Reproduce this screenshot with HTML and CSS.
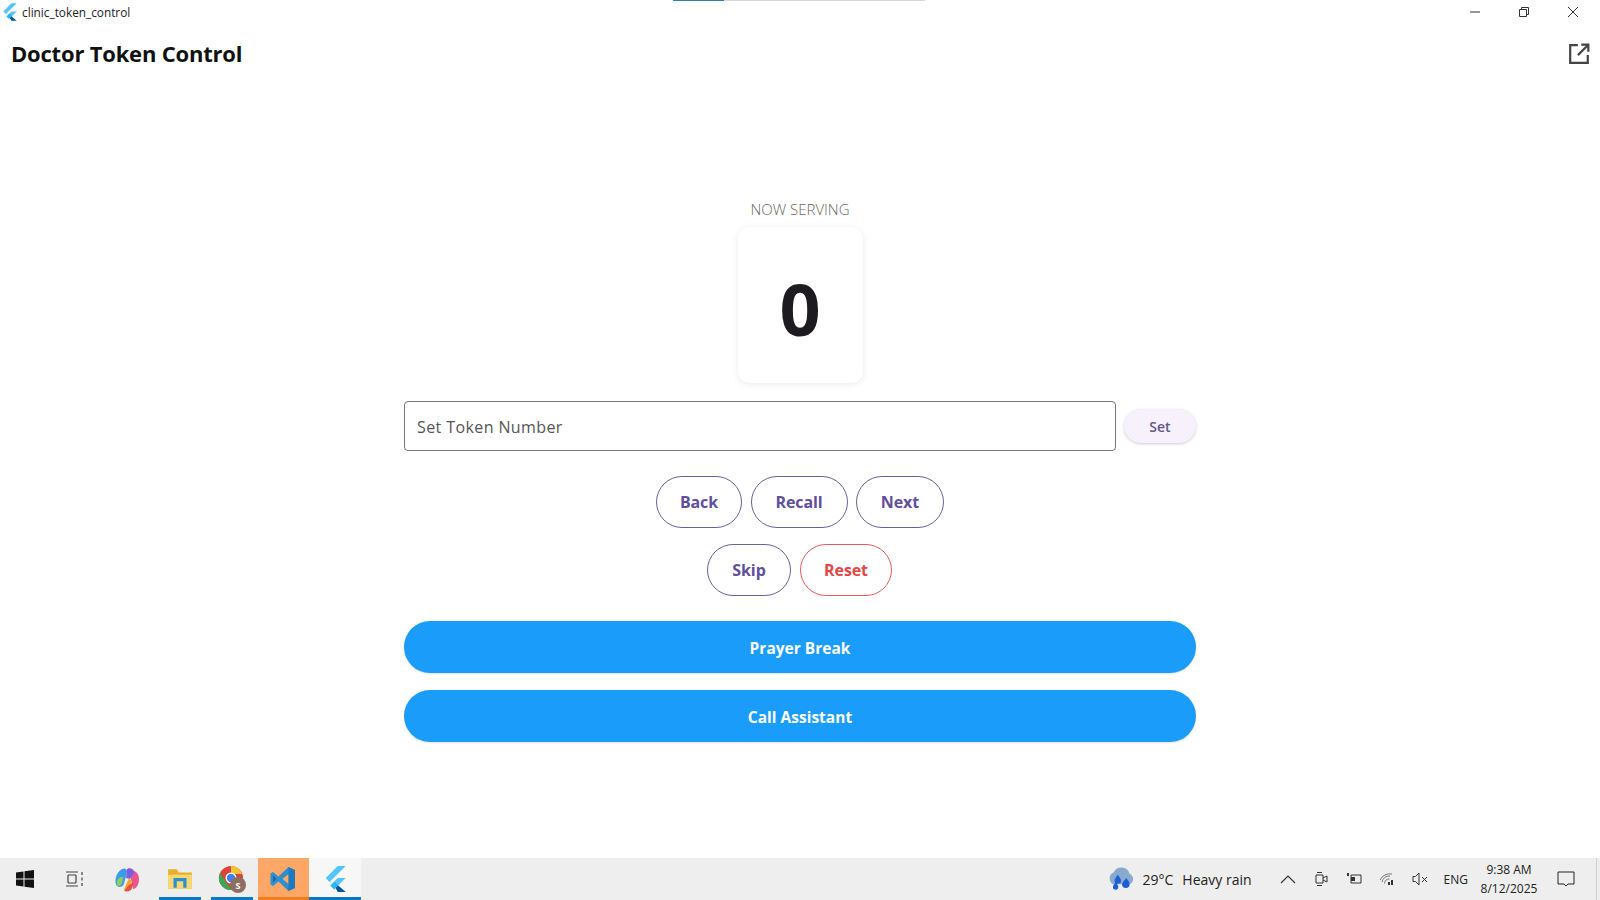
FILE: index.html
```html
<!DOCTYPE html>
<html lang="en">
<head>
  <meta charset="UTF-8">
  <title>clinic_token_control</title>
  <link rel="stylesheet" href="styles.css">
</head>
<body>
  <svg class="defs" width="0" height="0">
    <symbol id="flutter" viewBox="0 0 24 28">
      <path fill="#54c5f8" d="M15 0h8.5L6.2 17.3 2 13z"/>
      <path fill="#54c5f8" d="M15 13h8.5l-8 8-4.3-4.2z"/>
      <path fill="#01579b" d="M11.2 16.8l4.3 4.2 8 7H15l-3.8-7z"/>
      <path fill="#29b6f6" d="M7 21l4.2-4.2 4.3 4.2-4.3 4.2z"/>
    </symbol>
  </svg>

  <!-- progress strip from the screen recorder -->
  <div class="top-strip"><div class="top-strip-fill"></div></div>

  <!-- Window title bar -->
  <div class="titlebar">
    <svg class="titlebar-logo"><use href="#flutter"/></svg>
    <span class="titlebar-name">clinic_token_control</span>
    <div class="window-buttons">
      <svg class="window-btn" viewBox="0 0 12 12"><path d="M1 6h10" stroke="#333" fill="none"/></svg>
      <svg class="window-btn" viewBox="0 0 12 12"><path d="M1.5 3.5h7v7h-7zM3.5 3.5v-2h7v7h-2" stroke="#333" fill="none"/></svg>
      <svg class="window-btn" viewBox="0 0 12 12"><path d="M1 1l10 10M11 1L1 11" stroke="#333" fill="none"/></svg>
    </div>
  </div>

  <!-- App bar -->
  <div class="appbar">
    <div class="appbar-title">Doctor Token Control</div>
    <svg class="appbar-icon" viewBox="0 0 20 20"><path d="M9 2H2v16h16v-7M12 1.500h6.500V8M18 2l-9 9" stroke="#444" stroke-width="2" fill="none"/></svg>
  </div>

  <div class="content">
    <div class="panel">
      <div class="now-label">NOW SERVING</div>
      <div class="token-card">0</div>

      <div class="set-row">
        <div class="token-input">Set Token Number</div>
        <div class="set-btn">Set</div>
      </div>

      <div class="btn-row row-one">
        <div class="pill-btn back">Back</div>
        <div class="pill-btn recall">Recall</div>
        <div class="pill-btn next">Next</div>
      </div>
      <div class="btn-row row-two">
        <div class="pill-btn skip">Skip</div>
        <div class="pill-btn reset">Reset</div>
      </div>

      <div class="wide-btn first">Prayer Break</div>
      <div class="wide-btn">Call Assistant</div>
    </div>
  </div>

  <!-- Windows taskbar -->
  <div class="taskbar">
    <div class="task-item">
      <svg class="icon-20 nudge-start" viewBox="0 0 20 20"><path fill="#111" d="M1 3.500l7.500-1v7H1zM9.500 2.300L19 1v8.500H9.500zM1 10.500h7.500v7l-7.500-1zM9.500 10.500H19V19l-9.500-1.300z"/></svg>
    </div>
    <div class="task-item">
      <svg class="icon-20 nudge-view" viewBox="0 0 20 20"><path fill="none" stroke="#444" stroke-width="1.200" d="M1 3h12M1 17h12M3 6h8M3 14h8M3 6v8M11 6v8M17 3v3M17 8.500v3M17 14v3"/></svg>
    </div>
    <div class="task-item">
      <svg class="icon-26 nudge-view" viewBox="0 0 26 26">
        <path fill="#3f9be8" d="M8 3c3-1.500 5 0 5 3l-3 12c-1 3-5 4-7 2-3-3-2-13 5-17z"/>
        <path fill="#8fcf5a" d="M3 15c1-3 3-4 6-4l-1 6c-1 3-4 4-5 2z"/>
        <path fill="#e8558f" d="M14 2c3 0 5 1 6 3 3 1 5 4 5 8 0 6-3 10-6 10l-2-10z"/>
        <path fill="#7a5fe0" d="M13 3c4-1 7 0 7 4l-4 6-4-1z"/>
        <path fill="#f2a33a" d="M10 23l5-11 3 3-3 8c-1 2-4 2-5 0z"/>
        <path fill="#e5503f" d="M10 25c4 1 7 0 8-3l2-6-5 3z"/>
      </svg>
    </div>
    <div class="task-item running narrow">
      <svg class="icon-26" viewBox="0 0 24 24">
        <path fill="#e8b02a" d="M1 3h8l2 3h12v15H1z"/>
        <path fill="#f7d674" d="M1 8h22v13H1z"/>
        <path fill="#2b8fd0" d="M6 11h12v3H6zM6 14h3v6H6zM15 14h3v6h-3z"/>
      </svg>
    </div>
    <div class="task-item running narrow">
      <svg class="icon-28" viewBox="0 0 28 28">
        <circle cx="13" cy="13" r="12" fill="#d9453a"/>
        <path fill="#f2c230" d="M13 1a12 12 0 0 1 11 8H13z"/>
        <path fill="#3aa757" d="M2 8l7 11 5 6a12 12 0 0 1-12-17z"/>
        <circle cx="13" cy="13" r="5.500" fill="#fff"/>
        <circle cx="13" cy="13" r="4.200" fill="#3f82ee"/>
        <circle cx="20" cy="20" r="8" fill="#8d6e63"/>
        <text class="chrome-letter" x="20" y="24">S</text>
      </svg>
    </div>
    <div class="task-item running active-orange">
      <svg class="icon-26" viewBox="0 0 26 26">
        <path fill="#2d8fd0" d="M18.500 1L25 4v18l-6.500 3-10-9.500L3 20l-2.500-1.500V7.500L3 6l5.500 4.500z"/>
        <path fill="#ffa766" d="M18.500 8l-6 5 6 5z"/>
        <path fill="#1668a8" d="M3 9.500v7l3.500-3.500z"/>
        <path fill="#1668a8" d="M18.500 1L25 4v18l-6.500 3z" opacity="0.550"/>
      </svg>
    </div>
    <div class="task-item running active-light">
      <svg class="icon-26"><use href="#flutter"/></svg>
    </div>

    <div class="tray">
      <svg class="weather-icon" viewBox="0 0 28 24">
        <path fill="#8aa9cf" d="M7 17a6 6 0 0 1 0-11 8 8 0 0 1 15 1 5.500 5.500 0 0 1 0 10z"/>
        <path fill="#1a5fd8" d="M11 8c2 3 3 4 3 5.500a3 3 0 0 1-6 0C8 12 9 11 11 8zM19 11c2 3 3 4 3 6a3.500 3.500 0 0 1-7 0c0-2 2-3 4-6zM9 15c1.500 2 2.500 3 2.500 4.500a2.500 2.500 0 0 1-5 0C6.500 18 7.500 17 9 15z"/>
      </svg>
      <span class="weather-temp">29°C</span>
      <span class="weather-text">Heavy rain</span>
      <svg class="tray-icon chevron" viewBox="0 0 16 16"><path d="M1 12l7-7 7 7" fill="none" stroke="#333" stroke-width="1.200"/></svg>
      <svg class="tray-icon" viewBox="0 0 16 16"><path d="M3 4h7v8H3zM10 7l4-2v6l-4-2M4 1.500h5M4 14.500h5" fill="none" stroke="#333"/></svg>
      <svg class="tray-icon" viewBox="0 0 16 16"><path d="M5 4h10v8H5z" fill="none" stroke="#333"/><path d="M1 2h2v3H1zM5 6h4v4H5z" fill="#333"/></svg>
      <svg class="tray-icon" viewBox="0 0 16 16"><path d="M1 9a11 11 0 0 1 12-6M3 11a8 8 0 0 1 8-6M5.500 12.500a5 5 0 0 1 5-4.500" fill="none" stroke="#777"/><path d="M9 11h2v3H9zM12 9h2v5h-2z" fill="#333"/></svg>
      <svg class="tray-icon" viewBox="0 0 16 16"><path d="M1 5.500h2.500L7 2v12l-3.500-3.500H1zM10 6l5 5M15 6l-5 5" fill="none" stroke="#333"/></svg>
      <span class="tray-lang">ENG</span>
      <div class="tray-clock">
        <span>9:38 AM</span>
        <span>8/12/2025</span>
      </div>
      <svg class="notify-icon" viewBox="0 0 18 18"><path d="M1 2h16v12h-6l-2 2-2-2H1z" fill="none" stroke="#222"/></svg>
      <div class="show-desktop"></div>
    </div>
  </div>
</body>
</html>
```

FILE: styles.css
```css
/* General body styling */
body {
  margin: 0;
  height: 900px;
  overflow: hidden;
  display: flex;
  flex-direction: column;
  background-color: white;
  font-family: 'Open Sans', 'Noto Sans', sans-serif;
  color: #1d1b20;
}

.defs {
  position: absolute;
}

.top-strip {
  position: absolute;
  top: 0;
  left: 673px;
  width: 252px;
  height: 1px;
  background-color: #d8d8d8;
}

.top-strip-fill {
  width: 51px;
  height: 100%;
  background-color: #2a7fb8;
}

/* Title bar */
.titlebar {
  display: flex;
  align-items: center;
  height: 24px;
  padding-left: 2px;
}

.titlebar-logo {
  width: 15px;
  height: 18px;
}

.titlebar-name {
  margin-left: 5px;
  font-size: 11.800px;
  color: #222;
}

.window-buttons {
  margin-left: auto;
  display: flex;
  margin-right: 21px;
  gap: 37px;
}

.window-btn {
  width: 12px;
  height: 12px;
}

/* App bar */
.appbar {
  display: flex;
  align-items: center;
  justify-content: space-between;
  height: 60px;
  padding: 0 10px 0 11px;
}

.appbar-title {
  margin-bottom: 2px;
  font-size: 22px;
  font-weight: 700;
  letter-spacing: -0.2px;
  color: #111;
}

.appbar-icon {
  width: 22px;
  height: 22px;
}

/* Main column */
.content {
  flex: 1;
  display: flex;
  justify-content: center;
  padding-top: 114px;
}

.panel {
  width: 792px;
  display: flex;
  flex-direction: column;
  align-items: center;
}

.now-label {
  font-size: 15px;
  font-weight: 300;
  line-height: 22px;
  color: #666;
}

.token-card {
  width: 125px;
  height: 151px;
  margin-top: 7px;
  padding-top: 5px;
  display: flex;
  align-items: center;
  justify-content: center;
  border-radius: 12px;
  background-color: white;
  box-shadow: 0 1px 7px rgba(0, 0, 0, 0.09);
  font-size: 72px;
  font-weight: 700;
  color: #1d1b20;
}

.set-row {
  align-self: stretch;
  display: flex;
  align-items: center;
  gap: 8px;
  margin-top: 18px;
}

.token-input {
  flex: 1;
  height: 46px;
  display: flex;
  align-items: center;
  padding-left: 12px;
  padding-top: 2px;
  border: 1px solid #77757a;
  border-radius: 4px;
  font-size: 16px;
  letter-spacing: 0.4px;
  color: #555;
}

.set-btn {
  width: 72px;
  height: 34px;
  display: flex;
  align-items: center;
  justify-content: center;
  border-radius: 17px;
  background-color: #f6f1fa;
  box-shadow: 0 1px 3px rgba(0, 0, 0, 0.2);
  font-size: 14px;
  font-weight: 600;
  color: #65558f;
}

.btn-row {
  display: flex;
  justify-content: center;
  gap: 9px;
}

.row-one {
  margin-top: 25px;
  gap: 8.500px;
}

.row-two {
  margin-top: 16px;
}

.pill-btn {
  height: 50px;
  display: flex;
  align-items: center;
  justify-content: center;
  border: 1px solid #6d5e9c;
  border-radius: 26px;
  font-size: 16px;
  font-weight: 700;
  letter-spacing: -0.1px;
  color: #5f4f9e;
}

.back { width: 84px; }
.recall { width: 95px; }
.next { width: 86px; }
.skip { width: 82px; }

.reset {
  width: 90px;
  margin-right: 1px;
  border-color: #e35d5b;
  color: #e04848;
}

.wide-btn {
  align-self: stretch;
  height: 50px;
  padding-top: 2px;
  margin-top: 17px;
  display: flex;
  align-items: center;
  justify-content: center;
  border-radius: 26px;
  background-color: #1a9cfb;
  box-shadow: 0 1px 2px rgba(0, 0, 0, 0.12);
  font-size: 15.500px;
  font-weight: 700;
  color: white;
}

.wide-btn.first {
  margin-top: 25px;
}

/* Taskbar */
.taskbar {
  height: 42px;
  display: flex;
  background-color: #eeeeee;
  color: #222;
}

.task-item {
  width: 51.500px;
  height: 42px;
  box-sizing: border-box;
  display: flex;
  align-items: center;
  justify-content: center;
}

.running {
  border-bottom: 3px solid #0a78c8;
  padding-top: 3px;
}

.narrow {
  width: 42px;
  margin: 0 4.750px;
}

.active-orange {
  background-color: #ffa766;
  border-bottom-color: #f57c1f;
}

.active-light {
  background-color: #f7f7f7;
}

.icon-20 {
  width: 20px;
  height: 20px;
}

.icon-26 {
  width: 26px;
  height: 26px;
}

.icon-28 {
  width: 28px;
  height: 28px;
}

.nudge-start {
  margin-right: 2px;
}

.nudge-view {
  margin-right: 4px;
}

.chrome-letter {
  font-size: 9px;
  font-weight: 700;
  text-anchor: middle;
  fill: white;
}

.tray {
  margin-left: auto;
  display: flex;
  align-items: center;
  font-size: 14px;
}

.weather-icon {
  width: 30px;
  height: 26px;
}

.weather-temp {
  margin-left: 7px;
}

.weather-text {
  margin-left: 9px;
  margin-right: 11px;
}

.tray-icon {
  width: 16px;
  height: 16px;
  margin-left: 17px;
}

.tray-lang {
  font-size: 12px;
  margin-left: 16px;
}

.tray-clock {
  width: 72px;
  margin-left: 5px;
  display: flex;
  flex-direction: column;
  align-items: center;
  font-size: 12px;
  line-height: 19px;
}

.notify-icon {
  width: 18px;
  height: 18px;
  margin-left: 12px;
}

.show-desktop {
  width: 1px;
  height: 42px;
  margin-left: 21px;
  margin-right: 3px;
  background-color: #cfcfcf;
}
```
